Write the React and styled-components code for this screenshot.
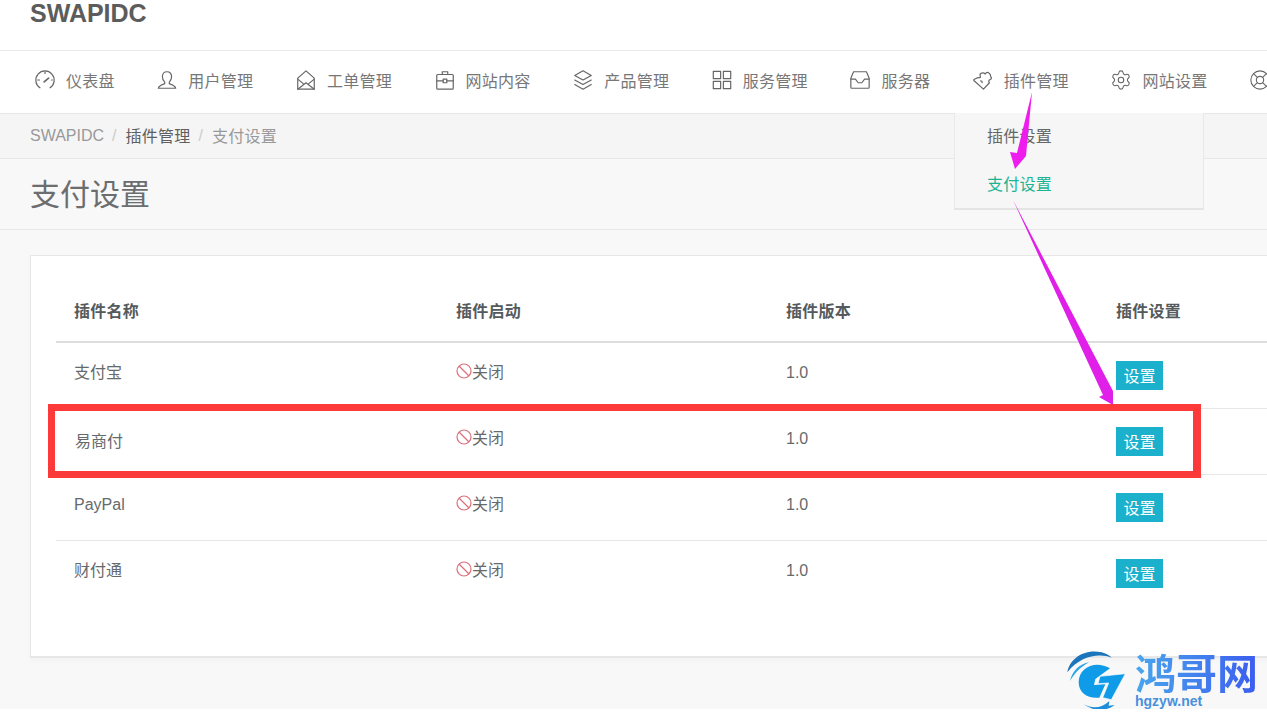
import React from "react";
import styled, { createGlobalStyle } from "styled-components";
import { Settings, LifeBuoy } from "lucide-react";

const GlobalStyle = createGlobalStyle`
  html, body {
    margin: 0;
    padding: 0;
    background: #fff;
  }
  body {
    font-family: "Liberation Sans", "Noto Sans CJK SC", sans-serif;
    color: #676a6c;
  }
`;

const Page = styled.div`
  position: relative;
  width: 1267px;
  height: 709px;
  overflow: hidden;
  background: #f8f8f8;
`;

const Header = styled.div`
  height: 50px;
  background: #fff;
  border-bottom: 1px solid #e9e9e9;
  padding-left: 30px;
`;

const Brand = styled.div`
  font-size: 25px;
  line-height: 26px;
  font-weight: bold;
  color: #5c5c5c;
`;

const Nav = styled.nav`
  display: flex;
  height: 62px;
  padding-left: 14px;
  background: #fff;
  border-bottom: 1px solid #e7e7e7;
  white-space: nowrap;
`;

const NavItem = styled.div`
  display: flex;
  align-items: center;
  flex: none;
  gap: 10px;
  padding: 0 21.6px 4px 21px;
  font-size: 16px;
  letter-spacing: 0.25px;
  color: #777;
  svg {
    flex: none;
    width: 22px;
    height: 22px;
    margin: -1px 0 0 -1px;
    color: #666;
  }
`;

const Breadcrumb = styled.div`
  display: flex;
  align-items: center;
  height: 44px;
  padding-left: 30px;
  background: #f5f5f5;
  border-bottom: 1px solid #e7e7e7;
  font-size: 16px;
  color: #999;
`;

const Crumb = styled.span`
  color: ${(p) => (p.$active ? "#5f5f5f" : "#999")};
  margin-top: ${(p) => (p.$latin ? "0" : "-3px")};
  letter-spacing: ${(p) => (p.$latin ? "0" : "0.25px")};
`;

const Slash = styled.span`
  margin: 0 9px 0 8px;
  color: #ccc;
`;

const TitleBar = styled.div`
  display: flex;
  align-items: center;
  height: 70px;
  padding: 0 0 0 30px;
  border-bottom: 1px solid #e7e7e7;
`;

const Title = styled.h1`
  margin: 0 0 5px;
  font-size: 30px;
  font-weight: 400;
  color: #6b6d6f;
`;

const Content = styled.div`
  padding: 25px 0 0 30px;
`;

const Card = styled.div`
  width: 1300px;
  height: 403px;
  box-sizing: border-box;
  padding: 25px 0 0 25px;
  background: #fff;
  border: 1px solid #e7e7e7;
  border-bottom-width: 2px;
  box-shadow: 0 3px 6px rgba(0, 0, 0, 0.025);
`;

const Table = styled.table`
  width: 1240px;
  border-collapse: collapse;
  table-layout: fixed;
  font-size: 16px;
`;

const HeadCell = styled.th`
  height: 58px;
  padding: 0 0 2px 18px;
  text-align: left;
  font-weight: bold;
  letter-spacing: 0.25px;
  color: #555a5c;
  border-bottom: 2px solid #ddd;
`;

const Row = styled.tr`
  height: 66px;
  border-bottom: 1px solid #e7e7e7;
  &:last-child {
    border-bottom: none;
  }
`;

const Cell = styled.td`
  padding: 0 0 ${(p) => p.$lift ?? 9}px ${(p) => p.$indent ?? 18}px;
  color: #676a6c;
`;

const ButtonCell = styled.td`
  padding: 0 0 0 18px;
`;

const Status = styled.span`
  display: inline-flex;
  align-items: center;
  svg {
    width: 16px;
    height: 16px;
    flex: none;
  }
`;

const SetButton = styled.button`
  display: block;
  width: 47px;
  height: 29px;
  padding: 0;
  border: none;
  background: #1bb0cb;
  color: #fff;
  font: inherit;
  font-size: 16px;
`;

const Dropdown = styled.div`
  position: absolute;
  left: 954px;
  top: 113px;
  width: 250px;
  height: 97px;
  box-sizing: border-box;
  background: #f6f6f6;
  border: 1px solid #e9e9e9;
  border-top: none;
  border-bottom: 2px solid #e4e4e4;
  padding-left: 32px;
`;

const DropItem = styled.div`
  height: 48px;
  line-height: 47px;
  font-size: 16px;
  letter-spacing: 0.25px;
  color: ${(p) => (p.$active ? "#1ab394" : "#666")};
`;

const Overlay = styled.svg`
  position: absolute;
  left: 0;
  top: 0;
  pointer-events: none;
`;

const Highlight = styled.div`
  position: absolute;
  left: 48px;
  top: 404px;
  width: 1153px;
  height: 74px;
  box-sizing: border-box;
  border: 7px solid #fd3a3a;
  border-right-width: 8px;
  pointer-events: none;
`;

const Watermark = styled.div`
  position: absolute;
  left: 1060px;
  top: 645px;
  display: flex;
`;

const MarkText = styled.div`
  margin: 3px 0 0 5px;
  display: flex;
  flex-direction: column;
`;

const MarkTitle = styled.div`
  width: 124px;
  font-family: "Noto Sans CJK SC", sans-serif;
  font-size: 41px;
  line-height: 46px;
  font-weight: bold;
  white-space: nowrap;
  background: linear-gradient(90deg, #4aa6ec, #3b5cf0);
  -webkit-background-clip: text;
  background-clip: text;
  color: transparent;
`;

const MarkSub = styled.div`
  font-size: 14px;
  line-height: 14px;
  font-weight: bold;
  color: #4a90dc;
`;

const Line = styled.svg.attrs({
  viewBox: "0 0 24 24",
  fill: "none",
  stroke: "currentColor",
  strokeWidth: 1.3,
  strokeLinecap: "round",
  strokeLinejoin: "round",
})``;

const icons = {
  gauge: (
    <Line>
      <path d="M6.5 20.5A10 10 0 1 1 17.5 20.5" />
      <path d="M11 14l5-4" strokeWidth="1.8" />
      <path d="M12 3v2M4 12h2M20 12h-1" />
    </Line>
  ),
  user: (
    <Line>
      <path d="M12 3C9 3 7 5.3 7 8.5c0 2.500 1 4.500 2.500 5.800V16c-2.500 1-6.500 2-7 5h19c-.5-3-4.500-4-7-5v-1.700c1.500-1.300 2.500-3.300 2.500-5.800C17 5.300 15 3 12 3z" />
    </Line>
  ),
  mail: (
    <Line>
      <path d="M3 22V10l9-8 9 8v12z" />
      <path d="M3 22l9-7 9 7M3 11l6 5M21 11l-6 5" />
    </Line>
  ),
  briefcase: (
    <Line>
      <rect x="3" y="6" width="18" height="16" rx="1" />
      <path d="M9 6V3h6v3M3 13h7M14 13h7" />
      <rect x="10" y="11" width="4" height="4" />
    </Line>
  ),
  layers: (
    <Line>
      <path d="M12 2l9 5-9 5-9-5z" />
      <path d="M3 12l9 5 9-5M3 17l9 5 9-5" />
    </Line>
  ),
  grid: (
    <Line>
      <rect x="2.5" y="2.5" width="8" height="8" />
      <rect x="13.5" y="2.5" width="8" height="8" />
      <rect x="2.5" y="13.5" width="8" height="8" />
      <rect x="13.5" y="13.5" width="8" height="8" />
    </Line>
  ),
  drawer: (
    <Line>
      <path d="M5 3h14l3 7v10a1 1 0 0 1-1 1H3a1 1 0 0 1-1-1V10z" />
      <path d="M2 11h5l3 4h4l3-4h5" />
    </Line>
  ),
  puzzle: (
    <Line>
      <path d="M2 12.5 12.500 22l6.500-7c-1.500-1.500-.5-3.500 1-3.500 1.500-1 1.500-2 .5-3 0-1-.5-3.500-2.500-4.500-1.500-.5-3 .5-3.500 1.500-1-1-3-1.500-4-1-1.500.5-2 2-1.500 3.500.5 1 0 1.500-1 1.500-1.500-.5-3 .5-6 2z" />
      <path d="M9.5 13c1 0 2 1 1.500 2" />
    </Line>
  ),
};

function BanIcon() {
  return (
    <svg viewBox="0 0 16 16" fill="none" stroke="#d9707c" strokeWidth="1.2">
      <circle cx="8" cy="8" r="7" />
      <path d="M3 3l10 10" />
    </svg>
  );
}

function GLogo() {
  return (
    <svg width="70" height="66" viewBox="0 0 210 198">
      <path d="M22 82C28 42 72 10 125 22c12 3 24 9 30 16C120 24 62 30 22 82z" fill="#1b75bb" />
      <path d="M30 108c6-28 28-52 58-56C64 64 44 84 30 108z" fill="#2aa5ea" />
      <path d="M150 70C108 44 56 66 56 112c0 32 28 50 62 46l18-40-34 2 4-18z" fill="#0f9be8" />
      <path d="M120 94l76-8-42 78-26-6 18-44-32 2z" fill="#0f9be8" stroke="#fff" strokeWidth="2" />
      <path d="M72 178c24 14 54 12 76-10l-2 14 18-2c-26 20-64 20-92-2z" fill="#1b8fdc" />
    </svg>
  );
}

const navItems = [
  { icon: icons.gauge, label: "仪表盘" },
  { icon: icons.user, label: "用户管理" },
  { icon: icons.mail, label: "工单管理" },
  { icon: icons.briefcase, label: "网站内容" },
  { icon: icons.layers, label: "产品管理" },
  { icon: icons.grid, label: "服务管理" },
  { icon: icons.drawer, label: "服务器" },
  { icon: icons.puzzle, label: "插件管理" },
  { icon: <Settings strokeWidth={1.2} />, label: "网站设置" },
  { icon: <LifeBuoy strokeWidth={1.2} /> },
];

const plugins = ["支付宝", "易商付", "PayPal", "财付通"];

function nameCellProps(name) {
  if (name === "易商付") return { $lift: 2, $indent: 19 };
  if (name === "PayPal") return { $lift: 5 };
  return {};
}

export default function App() {
  return (
    <Page>
      <GlobalStyle />
      <Header>
        <Brand>SWAPIDC</Brand>
      </Header>
      <Nav>
        {navItems.map((item, i) => (
          <NavItem key={i}>
            {item.icon}
            {item.label && <span>{item.label}</span>}
          </NavItem>
        ))}
      </Nav>
      <Breadcrumb>
        <Crumb $latin>SWAPIDC</Crumb>
        <Slash>/</Slash>
        <Crumb $active>插件管理</Crumb>
        <Slash>/</Slash>
        <Crumb>支付设置</Crumb>
      </Breadcrumb>
      <TitleBar>
        <Title>支付设置</Title>
      </TitleBar>
      <Content>
        <Card>
          <Table>
            <colgroup>
              <col width="382" />
              <col width="330" />
              <col width="330" />
              <col width="198" />
            </colgroup>
            <thead>
              <tr>
                <HeadCell>插件名称</HeadCell>
                <HeadCell>插件启动</HeadCell>
                <HeadCell>插件版本</HeadCell>
                <HeadCell>插件设置</HeadCell>
              </tr>
            </thead>
            <tbody>
              {plugins.map((name) => (
                <Row key={name}>
                  <Cell {...nameCellProps(name)}>{name}</Cell>
                  <Cell>
                    <Status>
                      <BanIcon />
                      关闭
                    </Status>
                  </Cell>
                  <Cell $lift={5}>1.0</Cell>
                  <ButtonCell>
                    <SetButton>设置</SetButton>
                  </ButtonCell>
                </Row>
              ))}
            </tbody>
          </Table>
        </Card>
      </Content>
      <Dropdown>
        <DropItem>插件设置</DropItem>
        <DropItem $active>支付设置</DropItem>
      </Dropdown>
      <Overlay width="1267" height="709" viewBox="0 0 1267 709">
        <polygon points="1032,92 1026,156 1015,169 1010,152 1017,153" fill="#ee1cec" />
        <polygon points="1013,200 1113,391 1113,405 1099,397 1103,395" fill="#e01fe8" />
      </Overlay>
      <Highlight />
      <Watermark>
        <GLogo />
        <MarkText>
          <MarkTitle>鸿哥网</MarkTitle>
          <MarkSub>hgzyw.net</MarkSub>
        </MarkText>
      </Watermark>
    </Page>
  );
}
